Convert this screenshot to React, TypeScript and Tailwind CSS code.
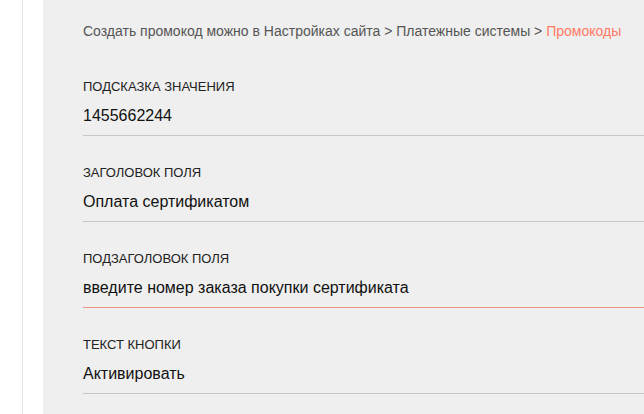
const fields = [
	{ label: "Подсказка значения", value: "1455662244", active: false },
	{ label: "Заголовок поля", value: "Оплата сертификатом", active: false },
	{ label: "Подзаголовок поля", value: "введите номер заказа покупки сертификата", active: true },
	{ label: "Текст кнопки", value: "Активировать", active: false },
];

export default function App() {
	return (
		<div className="flex h-[414px] w-[644px] overflow-hidden bg-white font-['Liberation_Sans',Arial,sans-serif]">
			<div className="w-[22px] shrink-0" />
			<div className="w-px shrink-0 bg-[#e3e3e3]" />
			<div className="w-[20px] shrink-0" />
			<div className="flex-1 bg-[#efefef] pl-10 pt-[21px]">
				<p className="text-[14px] leading-5 text-[#555]">
					Создать промокод можно в Настройках сайта &gt; Платежные системы &gt;{" "}
					<a className="text-[#ff7a66]">Промокоды</a>
				</p>
				<div className="mt-[38px] flex flex-col gap-[29px]">
					{fields.map((f) => (
						<div
							key={f.label}
							className={
								f.active
									? "border-b border-[#ec9580] pb-[9px]"
									: "border-b border-[#c6c6c6] pb-[9px]"
							}
						>
							<div className="text-[13px] uppercase leading-4 text-[#222]">{f.label}</div>
							<div className="mt-[11px] text-[16px] leading-5 text-[#111]">{f.value}</div>
						</div>
					))}
				</div>
			</div>
		</div>
	);
}
